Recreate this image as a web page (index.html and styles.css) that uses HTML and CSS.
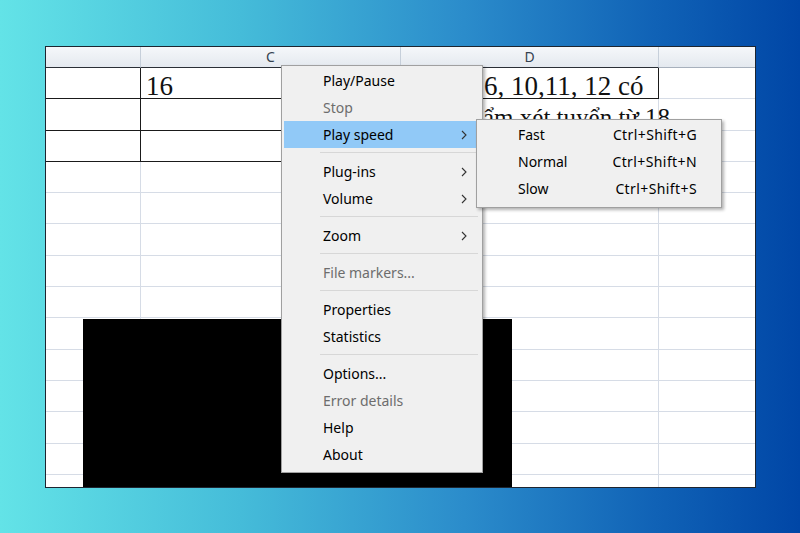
FILE: index.html
```html
<!DOCTYPE html>
<html lang="vi">
<head>
  <meta charset="UTF-8" />
  <meta name="viewport" content="width=device-width, initial-scale=1.0"/>
  <title>Play speed menu</title>
  <link rel="stylesheet" href="styles.css">
</head>
<body>
  <div class="sheet">
    <div class="grid">
      <!-- column headers -->
      <div class="head hard-bottom"></div>
      <div class="head hard-bottom">C</div>
      <div class="head hard-bottom">D</div>
      <div class="head"></div>

      <!-- row 1 -->
      <div class="cell hard"></div>
      <div class="cell hard text num">16</div>
      <div class="cell hard text d1">6, 10,11, 12 có</div>
      <div class="cell"></div>
      <!-- row 2 -->
      <div class="cell hard"></div>
      <div class="cell hard"></div>
      <div class="cell text d2">ẩm xét tuyển từ 18</div>
      <div class="cell"></div>
      <!-- row 3 -->
      <div class="cell hard"></div>
      <div class="cell hard"></div>
      <div class="cell"></div>
      <div class="cell"></div>

      <div class="cell"></div><div class="cell"></div><div class="cell"></div><div class="cell"></div>
      <div class="cell"></div><div class="cell"></div><div class="cell"></div><div class="cell"></div>
      <div class="cell"></div><div class="cell"></div><div class="cell"></div><div class="cell"></div>
      <div class="cell"></div><div class="cell"></div><div class="cell"></div><div class="cell"></div>
      <div class="cell"></div><div class="cell"></div><div class="cell"></div><div class="cell"></div>
      <div class="cell"></div><div class="cell"></div><div class="cell"></div><div class="cell"></div>
      <div class="cell"></div><div class="cell"></div><div class="cell"></div><div class="cell"></div>
      <div class="cell"></div><div class="cell"></div><div class="cell"></div><div class="cell"></div>
      <div class="cell"></div><div class="cell"></div><div class="cell"></div><div class="cell"></div>
      <div class="cell"></div><div class="cell"></div><div class="cell"></div><div class="cell"></div>
      <div class="cell"></div><div class="cell"></div><div class="cell"></div><div class="cell"></div>
    </div>

    <!-- video area -->
    <div class="video"></div>
  </div>

  <!-- context menu -->
  <div class="menu main-menu">
    <div class="item">Play/Pause</div>
    <div class="item disabled">Stop</div>
    <div class="item active">Play speed
      <svg class="arrow" width="6" height="10" viewBox="0 0 6 10"><path d="M1 1l4 4-4 4" fill="none" stroke="#333" stroke-width="1.1"/></svg>
    </div>
    <div class="sep"></div>
    <div class="item">Plug-ins
      <svg class="arrow" width="6" height="10" viewBox="0 0 6 10"><path d="M1 1l4 4-4 4" fill="none" stroke="#333" stroke-width="1.1"/></svg>
    </div>
    <div class="item">Volume
      <svg class="arrow" width="6" height="10" viewBox="0 0 6 10"><path d="M1 1l4 4-4 4" fill="none" stroke="#333" stroke-width="1.1"/></svg>
    </div>
    <div class="sep"></div>
    <div class="item">Zoom
      <svg class="arrow" width="6" height="10" viewBox="0 0 6 10"><path d="M1 1l4 4-4 4" fill="none" stroke="#333" stroke-width="1.1"/></svg>
    </div>
    <div class="sep"></div>
    <div class="item disabled">File markers...</div>
    <div class="sep"></div>
    <div class="item">Properties</div>
    <div class="item">Statistics</div>
    <div class="sep"></div>
    <div class="item">Options...</div>
    <div class="item disabled">Error details</div>
    <div class="item">Help</div>
    <div class="item">About</div>
  </div>

  <!-- play speed submenu -->
  <div class="menu sub-menu">
    <div class="item"><span>Fast</span><span class="key">Ctrl+Shift+G</span></div>
    <div class="item"><span>Normal</span><span class="key">Ctrl+Shift+N</span></div>
    <div class="item"><span>Slow</span><span class="key">Ctrl+Shift+S</span></div>
  </div>
</body>
</html>
```

FILE: styles.css
```css
body {
  margin: 0;
  padding: 46px 0 0 45px;
  height: 533px;
  box-sizing: border-box;
  overflow: hidden;
  font-family: "Noto Sans", "Liberation Sans", sans-serif;
  background: linear-gradient(90deg, #63e3e7 0%, #45bcd9 30%, #2b8ccb 58%, #1062b6 82%, #0046a6 100%);
}

.sheet {
  position: relative;
  width: 709px;
  height: 440px;
  border: 1px solid #1d2530;
  background: #fff;
  overflow: hidden;
}

.grid {
  display: grid;
  grid-template-columns: 95px 260px 258px 96px;
  grid-template-rows: 21px repeat(14, 31.3px);
}

.head {
  box-sizing: border-box;
  background: linear-gradient(#f5f7fa, #e4e9ef);
  border-right: 1px solid #c6cfda;
  border-bottom: 1px solid #a7b0bc;
  color: #34414f;
  font-size: 14px;
  line-height: 20px;
  text-align: center;
}

.head.hard-bottom {
  border-bottom-color: #2a2f36;
}

.head:nth-child(4n) {
  border-right: none;
}

.cell {
  box-sizing: border-box;
  border-right: 1px solid #d6dce6;
  border-bottom: 1px solid #d6dce6;
}

.cell:nth-child(4n) {
  border-right: none;
}

.cell.hard {
  border-right-color: #1a1a1a;
  border-bottom-color: #1a1a1a;
}

.text {
  font-family: "Liberation Serif", "DejaVu Serif", serif;
  font-size: 27px;
  line-height: 26px;
  padding-top: 5px;
  white-space: nowrap;
  color: #111;
}

.num {
  padding-left: 5px;
}

.d1 {
  padding-left: 83px;
}

.d2 {
  font-size: 25px;
  padding-left: 82px;
  padding-top: 6px;
}

.video {
  position: absolute;
  left: 37px;
  top: 272px;
  width: 429px;
  bottom: 0;
  background: #000;
}

/* menus */

.menu {
  position: absolute;
  box-sizing: border-box;
  background: #f0f0f0;
  border: 1px solid #a0a0a0;
  box-shadow: 2px 2px 3px rgba(0, 0, 0, 0.3);
  font-size: 14px;
  color: #000;
}

.main-menu {
  left: 281px;
  top: 65px;
  width: 202px;
  padding: 1px 0 4px;
}

.sub-menu {
  left: 476px;
  top: 119px;
  width: 246px;
  padding: 1px 0 5px;
}

.item {
  display: flex;
  justify-content: space-between;
  align-items: center;
  height: 27px;
  margin: 0 4px 0 2px;
  padding: 0 11px 0 39px;
  white-space: nowrap;
}

.sub-menu .item {
  padding: 0 20px 0 39px;
}

.key {
  letter-spacing: 0.4px;
}

.item.active {
  background: #91c9f7;
}

.item.disabled {
  color: #6d6d6d;
}

.sep {
  height: 1px;
  background: #d7d7d7;
  margin: 4px 4px 5px 38px;
}
```
